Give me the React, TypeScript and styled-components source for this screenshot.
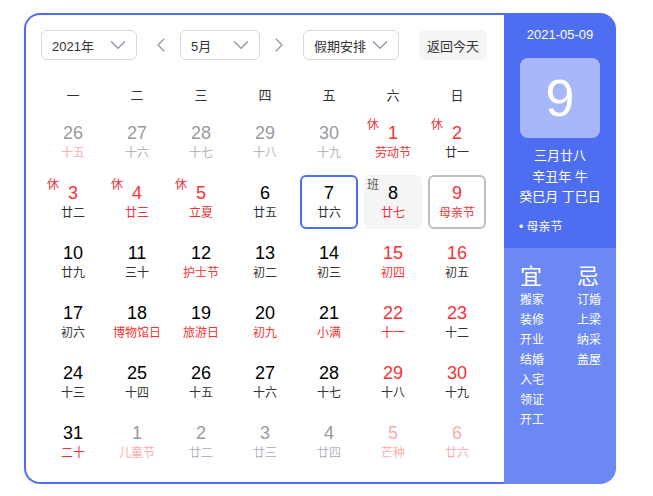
import React from 'react';
import styled, { createGlobalStyle } from 'styled-components';
import { ChevronDown, ChevronLeft, ChevronRight } from 'lucide-react';

const blue = '#4e6ef2';
const red = '#f73131';
const pink = '#fdaeae';
const grayNum = '#989aa3';
const grayLunar = '#b4b6bd';
const dark = '#333';

const GlobalStyle = createGlobalStyle`
  html, body { margin: 0; padding: 0; background: #fff; }
  body { font-family: "Liberation Sans", "Noto Sans CJK SC", sans-serif; }
`;

const Page = styled.div`
  padding: 13px 0 0 24px;
`;

const Widget = styled.div`
  display: flex;
  width: 592px;
  height: 471px;
  box-shadow: 0 2px 6px rgba(0, 0, 0, 0.06);
  border-radius: 16px;
`;

const Main = styled.div`
  flex: 1;
  border: 2px solid ${blue};
  border-right: none;
  border-radius: 16px 0 0 16px;
  padding: 15px 16px 0 15px;
  display: flex;
  flex-direction: column;
`;

const Toolbar = styled.div`
  display: flex;
  align-items: center;
  height: 30px;
`;

const Select = styled.div<{ $w: number; $ml?: number }>`
  width: ${p => p.$w}px;
  margin-left: ${p => p.$ml ?? 0}px;
  height: 30px;
  box-sizing: border-box;
  border: 1px solid #d7d9e0;
  border-radius: 6px;
  display: flex;
  align-items: center;
  justify-content: space-between;
  padding: 0 5px 0 10px;
  font-size: 13px;
  color: ${dark};
  svg { color: #9195a3; }
`;

const Arrow = styled.div<{ $ml: number }>`
  width: 24px;
  margin-left: ${p => p.$ml}px;
  display: flex;
  justify-content: center;
  color: #9195a3;
`;

const TodayButton = styled.div`
  margin-left: 20px;
  width: 68px;
  height: 30px;
  border-radius: 6px;
  background: #f5f5f6;
  display: flex;
  align-items: center;
  justify-content: center;
  font-size: 13px;
  color: ${dark};
`;

const Grid = styled.div`
  margin: 19px 0 0 3px;
  display: grid;
  grid-template-columns: repeat(7, 58px);
  grid-template-rows: 30px;
  grid-auto-rows: 54px;
  gap: 6px;
`;

const WeekDay = styled.div`
  display: flex;
  align-items: center;
  justify-content: center;
  font-size: 13px;
  color: ${dark};
`;

const Cell = styled.div<{ $border?: string; $bg?: string }>`
  position: relative;
  box-sizing: border-box;
  border: 2px solid ${p => p.$border ?? 'transparent'};
  background: ${p => p.$bg ?? 'transparent'};
  border-radius: 6px;
  display: flex;
  flex-direction: column;
  align-items: center;
  justify-content: center;
`;

const Num = styled.div<{ $c: string }>`
  font-size: 18px;
  line-height: 22px;
  color: ${p => p.$c};
`;

const Lunar = styled.div<{ $c: string }>`
  font-size: 12px;
  line-height: 18px;
  color: ${p => p.$c};
  white-space: nowrap;
`;

const Badge = styled.span<{ $c: string }>`
  position: absolute;
  top: 1px;
  left: 1px;
  font-size: 12px;
  line-height: 14px;
  color: ${p => p.$c};
`;

const Side = styled.div`
  width: 112px;
  flex-shrink: 0;
  border-radius: 0 16px 16px 0;
  overflow: hidden;
  display: flex;
  flex-direction: column;
  color: #fff;
`;

const SideTop = styled.div`
  height: 235px;
  background: ${blue};
  display: flex;
  flex-direction: column;
  align-items: center;
  padding-top: 14px;
  box-sizing: border-box;
`;

const DateLine = styled.div`
  font-size: 13px;
  line-height: 16px;
`;

const BigDay = styled.div`
  margin-top: 15px;
  width: 80px;
  height: 80px;
  border-radius: 8px;
  background: rgba(255, 255, 255, 0.5);
  display: flex;
  align-items: center;
  justify-content: center;
  font-size: 52px;
`;

const LunarInfo = styled.div`
  margin-top: 8px;
  font-size: 13px;
  line-height: 20.5px;
  text-align: center;
`;

const Festival = styled.div`
  align-self: stretch;
  padding-left: 15px;
  margin-top: 11px;
  font-size: 12px;
  line-height: 16px;
`;

const SideBottom = styled.div`
  flex: 1;
  background: #6b88f4;
  display: flex;
  padding: 16px 0 0 16px;
`;

const Column = styled.div`
  width: 57px;
  flex-shrink: 0;
  display: flex;
  flex-direction: column;
`;

const ColTitle = styled.div`
  font-size: 22px;
  line-height: 26px;
`;

const ColItem = styled.div`
  font-size: 12px;
  line-height: 20px;
`;

type Day = {
  n: number;
  l: string;
  nc: string;
  lc: string;
  badge?: string;
  badgeColor?: string;
  border?: string;
  bg?: string;
};

const g = (n: number, l: string, lc = grayLunar): Day => ({ n, l, nc: grayNum, lc });
const d = (n: number, l: string, nc = '#000', lc = dark, extra: Partial<Day> = {}): Day => ({
  n,
  l,
  nc,
  lc,
  ...extra,
});
const rest = { badge: '休', badgeColor: red };

const days: Day[] = [
  g(26, '十五', pink),
  g(27, '十六'),
  g(28, '十七'),
  g(29, '十八'),
  g(30, '十九'),
  d(1, '劳动节', red, red, rest),
  d(2, '廿一', red, dark, rest),
  d(3, '廿二', red, dark, rest),
  d(4, '廿三', red, red, rest),
  d(5, '立夏', red, red, rest),
  d(6, '廿五'),
  d(7, '廿六', '#000', dark, { border: blue }),
  d(8, '廿七', '#000', red, { badge: '班', badgeColor: '#555', bg: '#f5f5f6' }),
  d(9, '母亲节', red, red, { border: '#bfc0c6' }),
  d(10, '廿九'),
  d(11, '三十'),
  d(12, '护士节', '#000', red),
  d(13, '初二'),
  d(14, '初三'),
  d(15, '初四', red, red),
  d(16, '初五', red),
  d(17, '初六'),
  d(18, '博物馆日', '#000', red),
  d(19, '旅游日', '#000', red),
  d(20, '初九', '#000', red),
  d(21, '小满', '#000', red),
  d(22, '十一', red, red),
  d(23, '十二', red),
  d(24, '十三'),
  d(25, '十四'),
  d(26, '十五'),
  d(27, '十六'),
  d(28, '十七'),
  d(29, '十八', red),
  d(30, '十九', red),
  d(31, '二十', '#000', red),
  g(1, '儿童节', pink),
  g(2, '廿二'),
  g(3, '廿三'),
  g(4, '廿四'),
  { n: 5, l: '芒种', nc: pink, lc: pink },
  { n: 6, l: '廿六', nc: pink, lc: pink },
];

const weekDays = ['一', '二', '三', '四', '五', '六', '日'];
const good = ['搬家', '装修', '开业', '结婚', '入宅', '领证', '开工'];
const bad = ['订婚', '上梁', '纳采', '盖屋'];

export default function App() {
  return (
    <Page>
      <GlobalStyle />
      <Widget>
        <Main>
          <Toolbar>
            <Select $w={96}>
              2021年
              <ChevronDown size={26} strokeWidth={1.2} />
            </Select>
            <Arrow $ml={12}>
              <ChevronLeft size={28} strokeWidth={1.2} />
            </Arrow>
            <Select $w={80} $ml={7}>
              5月
              <ChevronDown size={26} strokeWidth={1.2} />
            </Select>
            <Arrow $ml={7}>
              <ChevronRight size={28} strokeWidth={1.2} />
            </Arrow>
            <Select $w={96} $ml={12}>
              假期安排
              <ChevronDown size={26} strokeWidth={1.2} />
            </Select>
            <TodayButton>返回今天</TodayButton>
          </Toolbar>
          <Grid>
            {weekDays.map(w => (
              <WeekDay key={w}>{w}</WeekDay>
            ))}
            {days.map((day, i) => (
              <Cell key={i} $border={day.border} $bg={day.bg}>
                {day.badge && <Badge $c={day.badgeColor!}>{day.badge}</Badge>}
                <Num $c={day.nc}>{day.n}</Num>
                <Lunar $c={day.lc}>{day.l}</Lunar>
              </Cell>
            ))}
          </Grid>
        </Main>
        <Side>
          <SideTop>
            <DateLine>2021-05-09</DateLine>
            <BigDay>9</BigDay>
            <LunarInfo>
              三月廿八
              <br />
              辛丑年 牛
              <br />
              癸巳月 丁巳日
            </LunarInfo>
            <Festival>• 母亲节</Festival>
          </SideTop>
          <SideBottom>
            <Column>
              <ColTitle>宜</ColTitle>
              {good.map(t => (
                <ColItem key={t}>{t}</ColItem>
              ))}
            </Column>
            <Column>
              <ColTitle>忌</ColTitle>
              {bad.map(t => (
                <ColItem key={t}>{t}</ColItem>
              ))}
            </Column>
          </SideBottom>
        </Side>
      </Widget>
    </Page>
  );
}
